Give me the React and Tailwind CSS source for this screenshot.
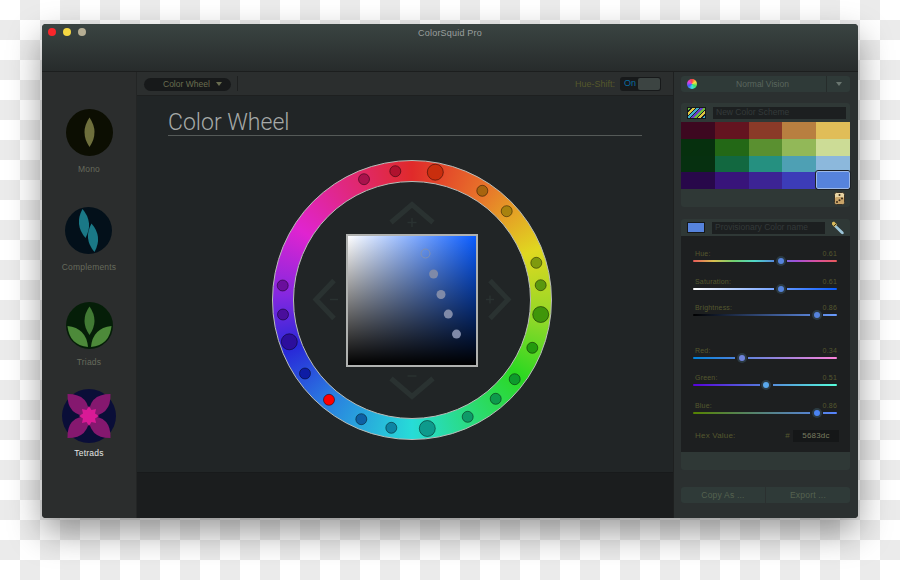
import React from 'react';

// pointed leaf shape between two tips, w is the widest part
const lens = (x1, y1, x2, y2, w) => {
    const dx = x2 - x1;
    const dy = y2 - y1;
    const len = Math.hypot(dx, dy);
    const nx = (-dy / len) * w;
    const ny = (dx / len) * w;
    const mx = (x1 + x2) / 2;
    const my = (y1 + y2) / 2;
    return `M${x1} ${y1}Q${mx + nx} ${my + ny} ${x2} ${y2}Q${mx - nx} ${my - ny} ${x1} ${y1}Z`;
};

const starPoints = Array.from({ length: 16 }, (_, i) => {
    const r = i % 2 === 0 ? 10 : 6.5;
    const t = (i * Math.PI) / 8;
    return `${27 + r * Math.sin(t)},${27 - r * Math.cos(t)}`;
}).join(' ');

const MonoIcon = () => (
    <svg width="47" height="47" viewBox="0 0 47 47">
        <circle cx="23.5" cy="23.5" r="23.5" fill="#0c0e02" />
        <path d={lens(23.5, 8.5, 23.5, 38, 10)} fill="#6e6f3c" />
    </svg>
);

const ComplementsIcon = () => (
    <svg width="47" height="47" viewBox="0 0 47 47">
        <circle cx="23.5" cy="23.5" r="23.5" fill="#03101a" />
        <path d={lens(17.5, 2, 20.5, 31, 10)} fill="#1a7886" />
        <path d={lens(26.5, 16.5, 29.5, 45, 10)} fill="#1a7886" />
    </svg>
);

const TriadsIcon = () => (
    <svg width="47" height="47" viewBox="0 0 47 47">
        <circle cx="23.5" cy="23.5" r="23.5" fill="#051e08" />
        <path d={lens(23.5, 4.5, 23.5, 33, 10)} fill="#417a34" />
        <path d={lens(1.5, 24, 22, 45, 12)} fill="#4d8a3a" />
        <path d={lens(45.5, 24, 25, 45, 12)} fill="#4d8a3a" />
    </svg>
);

const TetradsIcon = () => (
    <svg width="54" height="54" viewBox="0 0 54 54">
        <circle cx="27" cy="27" r="27" fill="#0a0e38" />
        <path d={lens(27, 27, 5.5, 5, 16)} fill="#85186f" />
        <path d={lens(27, 27, 48.5, 5, 16)} fill="#85186f" />
        <path d={lens(27, 27, 5.5, 49, 16)} fill="#85186f" />
        <path d={lens(27, 27, 48.5, 49, 16)} fill="#85186f" />
        <polygon points={starPoints} fill="#d91a96" />
    </svg>
);

const schemes = [
    { label: 'Mono', icon: <MonoIcon />, item: 'mt-[37px]', text: 'mt-[7px] text-[#666a5c]' },
    { label: 'Complements', icon: <ComplementsIcon />, item: 'mt-[32px]', text: 'mt-[7px] text-[#666a5c]' },
    { label: 'Triads', icon: <TriadsIcon />, item: 'mt-[29px]', text: 'mt-[7px] text-[#666a5c]' },
    { label: 'Tetrads', icon: <TetradsIcon />, item: 'mt-[21px]', text: 'mt-[4px] text-[#e4e6e4]' },
];

const swatches = [
    ['#3d0820', '#641420', '#8a3a28', '#b87f40', '#e0bd58'],
    ['#06300e', '#236816', '#5a9030', '#92b858', '#ccdc96'],
    ['#063010', '#126840', '#259080', '#4ea0b4', '#8cb8dc'],
    ['#28084a', '#38147a', '#3c2494', '#3c3cb8', '#5683dc'],
];

const wheelDots = [
    [364, 179.7, 5.5, '#a8124c'], [395.3, 171.7, 5.5, '#b0122e'], [435.3, 172.7, 8, '#c92e0e'],
    [482.3, 191.3, 5.5, '#a8640e'], [506.7, 211.7, 5.5, '#a8820e'], [536.3, 263.3, 5.5, '#7f9a0e'],
    [540.7, 285.7, 5.5, '#5a980e'], [540.7, 315, 8, '#3f960a'], [532.3, 348.3, 5.5, '#239a0e'],
    [514.7, 379.7, 5.5, '#0e9a2c'], [495.7, 399.3, 5.5, '#0e9a4c'], [467.7, 417.3, 5.5, '#0e9a68'],
    [427.3, 429, 8, '#0e9a8c'], [391.3, 428.3, 5.5, '#0e84a4'], [361.3, 419.7, 5.5, '#0e60a4'],
    [329, 400.3, 5.5, '#ff0000'], [305, 374, 5.5, '#0e1ca4'], [289.3, 342.3, 8, '#2c0e9c'],
    [283, 315, 5.5, '#4a0e9c'], [282.7, 286, 5.5, '#6a0e9c'],
];

const squareDots = [[433.6, 274.5], [441, 295], [448.3, 314.6], [456.5, 334.6]];

const sliders = [
    { label: 'Hue:', value: 0.61, track: 'bg-[linear-gradient(to_right,#e85a5a,#d8c050,#70d070,#50d8c8,#5683dc,#a050d8,#d850a0,#e85a5a)]', thumb: 'bg-[#5683dc]', wrap: 'mt-[12px]' },
    { label: 'Saturation:', value: 0.61, track: 'bg-[linear-gradient(to_right,#ffffff,#0a5cff)]', thumb: 'bg-[#5683dc]', wrap: 'mt-[14px]' },
    { label: 'Brightness:', value: 0.86, track: 'bg-[linear-gradient(to_right,#000000,#6a9cff)]', thumb: 'bg-[#5683dc]', wrap: 'mt-[12px]' },
    { label: 'Red:', value: 0.34, track: 'bg-[linear-gradient(to_right,#0083dc,#ff83dc)]', thumb: 'bg-[#6f83dc]', wrap: 'mt-[29px]' },
    { label: 'Green:', value: 0.51, track: 'bg-[linear-gradient(to_right,#5600dc,#56ffdc)]', thumb: 'bg-[#5aa8ec]', wrap: 'mt-[13px]' },
    { label: 'Blue:', value: 0.86, track: 'bg-[linear-gradient(to_right,#568300,#5683ff)]', thumb: 'bg-[#4a83f4]', wrap: 'mt-[14px]' },
];

const Slider = ({ label, value, track, thumb, wrap }) => (
    <div className={wrap}>
        <div className="flex justify-between h-[10px] items-center pl-[2px] text-[7px] leading-none tracking-[0.2px] text-[#55582f]">
            <span>{label}</span>
            <span>{value.toFixed(2)}</span>
        </div>
        <div className={`relative h-[2px] mt-[2px] rounded-full ${track}`}>
            <div
                className="absolute top-[1px] w-[13px] h-[10px] -mt-[5px] -ml-[6.5px] flex items-center justify-center bg-[#1d1f20]"
                style={{ left: `${value * 100}%` }}
            >
                <div className="w-[10px] h-[10px] rounded-full bg-[#2b3a42] flex items-center justify-center">
                    <div className={`w-[6px] h-[6px] rounded-full ${thumb}`}></div>
                </div>
            </div>
        </div>
    </div>
);

const Chevrons = () => (
    <g fill="none" stroke="#2a3231">
        <g strokeWidth="5">
            <path d="M391 223L412 205L433 223" />
            <path d="M391 379L412 397L433 379" />
            <path d="M334 281L316 300L334 319" />
            <path d="M490 281L508 300L490 319" />
        </g>
        <g strokeWidth="1.5">
            <path d="M407.5 223H416.5M412 218.5V227.5" />
            <path d="M407.5 376.5H416.5" />
            <path d="M330 300H338" />
            <path d="M486 300H494M490 296V304" />
        </g>
    </g>
);

const Die = () => (
    <svg width="11" height="13" viewBox="0 0 11 13">
        <rect x="0.5" y="0.5" width="10" height="12" rx="2" fill="#e8d5a4" stroke="#3a3226" />
        <rect x="1" y="5" width="9" height="7" rx="1.5" fill="#c9a468" />
        <circle cx="5.5" cy="3" r="1" fill="#3a2a1a" />
        <circle cx="3" cy="10" r="1" fill="#3a2a1a" />
        <circle cx="5.5" cy="8.2" r="1" fill="#3a2a1a" />
        <circle cx="8" cy="6.5" r="1" fill="#3a2a1a" />
    </svg>
);

const Eyedropper = () => (
    <svg width="14" height="14" viewBox="0 0 14 14">
        <path d="M4.5 3.5L12 10.5C13 11.5 13 13 12 13C11 13.5 10 12.5 9.5 12L3 5.5Z" fill="#9cc4d8" />
        <path d="M1 1.5L3 0.5L6 3.5L3.5 6L1 3.5Z" fill="#d9b95a" />
        <path d="M3 5L5 3" stroke="#3a3226" strokeWidth="1" />
    </svg>
);

const App = () => {
    return (
        <div className="w-[900px] h-[580px] overflow-hidden pt-[24px] pl-[42px] bg-[conic-gradient(#ebebeb_25%,#ffffff_0_50%,#ebebeb_0_75%,#ffffff_0)] bg-[size:40px_40px] font-['Liberation_Sans',sans-serif]">
            <div className="w-[816px] h-[494px] flex flex-col rounded-[4px] overflow-hidden bg-[#2b2d2d] shadow-[0_14px_34px_rgba(0,0,0,0.4)]">

                {/* Title bar */}
                <div className="relative h-[48px] shrink-0 flex justify-center pt-[3px] bg-[linear-gradient(to_bottom,#3a4442,#272b2b)] border-b border-[#1c1e1e]">
                    <div className="absolute left-[6px] top-[4px] flex gap-[7px]">
                        <div className="w-[8px] h-[8px] rounded-full bg-[#f9262b]"></div>
                        <div className="w-[8px] h-[8px] rounded-full bg-[#f5d742]"></div>
                        <div className="w-[8px] h-[8px] rounded-full bg-[#b5ad93]"></div>
                    </div>
                    <span className="mt-px text-[9px] leading-[11px] tracking-[0.2px] text-[#9a9f9e]">ColorSquid Pro</span>
                </div>

                <div className="flex flex-1 min-h-0">
                    {/* Scheme sidebar */}
                    <div className="w-[95px] shrink-0 flex flex-col items-center bg-[#2b2d2d] border-r border-[#232525]">
                        {schemes.map((s) => (
                            <div key={s.label} className={`flex flex-col items-center ${s.item}`}>
                                {s.icon}
                                <span className={`h-[12px] leading-[12px] text-[8.5px] tracking-[0.2px] ${s.text}`}>{s.label}</span>
                            </div>
                        ))}
                    </div>

                    {/* Main column */}
                    <div className="w-[536px] shrink-0 flex flex-col">
                        <div className="h-[24px] shrink-0 flex items-center pl-[7px] pr-[12px] bg-[#2b2e2e] border-b border-[#1e2020]">
                            <div className="w-[87px] h-[13px] mt-px rounded-full bg-[#17191a] flex items-center pl-[19px] text-[8.5px] text-[#6a6d50]">
                                <span>Color Wheel</span>
                                <span className="ml-[6px] w-0 h-0 border-x-[3px] border-x-transparent border-t-[4px] border-t-[#6a6d50]"></span>
                            </div>
                            <div className="ml-[6px] w-px h-[15px] bg-[#1e2020]"></div>
                            <span className="ml-auto mt-[2px] text-[9px] text-[#55582c]">Hue-Shift:</span>
                            <div className="ml-[5px] w-[41px] h-[14px] rounded-[3px] bg-[#17191a] flex items-center pl-[4px] pr-px">
                                <span className="mt-px text-[9px] text-[#0a6ca0]">On</span>
                                <div className="ml-auto w-[22px] h-[12px] rounded-[2px] bg-[#3c4442]"></div>
                            </div>
                        </div>

                        <div className="flex-1 flex flex-col bg-[#212526] pl-[31px] pr-[31px] pt-[11px] border-b border-[#181a1b]">
                            <h1 className="h-[28px] leading-[32px] text-[23px] font-light font-['Roboto',sans-serif] text-[#a6aaa8] border-b border-[#555a58] box-content">Color Wheel</h1>

                            {/* Wheel */}
                            <div className="relative w-[280px] h-[280px] mt-[24px] ml-[104px] rounded-full flex items-center justify-center border border-[#b8bcb8] bg-[conic-gradient(#e02a2a_0deg,#e8782a_35deg,#e0d820_68deg,#8cd828_100deg,#2bd821_125deg,#2bdb70_150deg,#27dcd8_180deg,#2a78e0_222deg,#2828d8_248deg,#8428e0_272deg,#e024d0_302deg,#e02878_332deg,#e02a2a_360deg)]">
                                <div className="w-[238px] h-[238px] rounded-full bg-[#212526] border border-[#b8bcb8] flex items-center justify-center">
                                    <div className="w-[132px] h-[133px] border-2 border-[#b0b2b0] bg-[linear-gradient(to_bottom,transparent,#000000),linear-gradient(to_right,#ffffff,#0a5cff)]"></div>
                                </div>
                                <svg className="absolute left-[-1px] top-[-1px] overflow-visible" width="280" height="280" viewBox="272 160.5 280 280">
                                    <Chevrons />
                                    <circle cx="425.5" cy="254" r="4.5" fill="none" stroke="#8090b0" strokeWidth="1" />
                                    {squareDots.map(([x, y]) => (
                                        <circle key={y} cx={x} cy={y} r="4.5" fill="#7f8aa8" />
                                    ))}
                                    {wheelDots.map(([x, y, r, c]) => (
                                        <circle key={`${x}-${y}`} cx={x} cy={y} r={r} fill={c} stroke="#000" strokeOpacity="0.45" strokeWidth="1" />
                                    ))}
                                </svg>
                            </div>
                        </div>
                        <div className="h-[45px] shrink-0 bg-[#1b1d1e]"></div>
                    </div>

                    {/* Right panel */}
                    <div className="flex-1 flex flex-col pl-[7px] pr-[9px] pt-[4px] bg-[#2b3030] border-l border-[#1e2020]">
                        <div className="h-[16px] shrink-0 flex items-center rounded-[3px] bg-[#2f3a38] text-[8.5px] text-[#5a665e]">
                            <div className="ml-[6px] w-[10px] h-[10px] rounded-full bg-[conic-gradient(#ff4040,#ffe040,#40e060,#40e0e0,#4060ff,#e040e0,#ff4040)]"></div>
                            <span className="flex-1 text-center pl-[2px] pt-px">Normal Vision</span>
                            <div className="w-[24px] h-full flex items-center justify-center border-l border-[#262c2b]">
                                <span className="w-0 h-0 border-x-[3px] border-x-transparent border-t-[4px] border-t-[#6a7670]"></span>
                            </div>
                        </div>

                        <div className="mt-[11px] h-[104px] shrink-0 flex flex-col rounded-[3px] bg-[#2f3836]">
                            <div className="h-[19px] shrink-0 flex items-center pl-[6px] pr-[4px]">
                                <div className="w-[19px] h-[12px] border border-[#15181a] bg-[repeating-linear-gradient(135deg,#6fbf3a_0_2px,#1a1d2a_2px_3px,#e0c840_3px_5px,#1a1d2a_5px_6px,#40b0c8_6px_8px,#1a1d2a_8px_9px,#6a40c8_9px_11px)]"></div>
                                <div className="ml-[7px] flex-1 h-[12px] flex items-center pl-[3px] bg-[#1c1f20] text-[8.5px] text-[#343a3a]">New Color Scheme</div>
                            </div>
                            <div className="grid grid-cols-5 grid-rows-4 h-[67px] w-[169px] shrink-0">
                                {swatches.flat().map((c, i) => (
                                    <div
                                        key={i}
                                        className={i === 19 ? 'rounded-[2px] border border-[#9cb8e8] outline outline-[#1c2024] -mt-px relative' : ''}
                                        style={{ backgroundColor: c }}
                                    ></div>
                                ))}
                            </div>
                            <div className="flex-1 flex items-center justify-end pr-[5px]">
                                <Die />
                            </div>
                        </div>

                        <div className="mt-[12px] h-[251px] shrink-0 flex flex-col rounded-[3px] overflow-hidden bg-[#2f3836]">
                            <div className="h-[17px] shrink-0 flex items-center pl-[6px] pr-[5px]">
                                <div className="w-[18px] h-[11px] border border-[#15181a] bg-[#5683dc]"></div>
                                <div className="ml-[7px] flex-1 h-[12px] flex items-center pl-[3px] bg-[#1c1f20] text-[8.5px] text-[#343a3a]">Provisionary Color name</div>
                                <div className="ml-[6px]">
                                    <Eyedropper />
                                </div>
                            </div>
                            <div className="h-[216px] shrink-0 flex flex-col pl-[12px] pr-[13px] bg-[#1d1f20]">
                                {sliders.map((s) => (
                                    <Slider key={s.label} {...s} />
                                ))}
                                <div className="mt-[16px] h-[12px] flex items-center pl-[2px] text-[8px] tracking-[0.2px] text-[#55582f]">
                                    <span>Hex Value:</span>
                                    <span className="ml-auto">#</span>
                                    <div className="ml-[3px] -mr-[2px] w-[46px] h-[12px] bg-[#151718] flex items-center justify-center text-[#7a7d60]">5683dc</div>
                                </div>
                            </div>
                        </div>

                        <div className="mt-[17px] h-[16px] shrink-0 flex gap-px text-[8.5px] tracking-[0.2px] text-[#556250]">
                            <div className="flex-1 flex items-center justify-center rounded-l-[3px] bg-[#2f3a38]">Copy As ...</div>
                            <div className="flex-1 flex items-center justify-center rounded-r-[3px] bg-[#2f3a38]">Export ...</div>
                        </div>
                    </div>
                </div>
            </div>
        </div>
    );
};

export default App;
